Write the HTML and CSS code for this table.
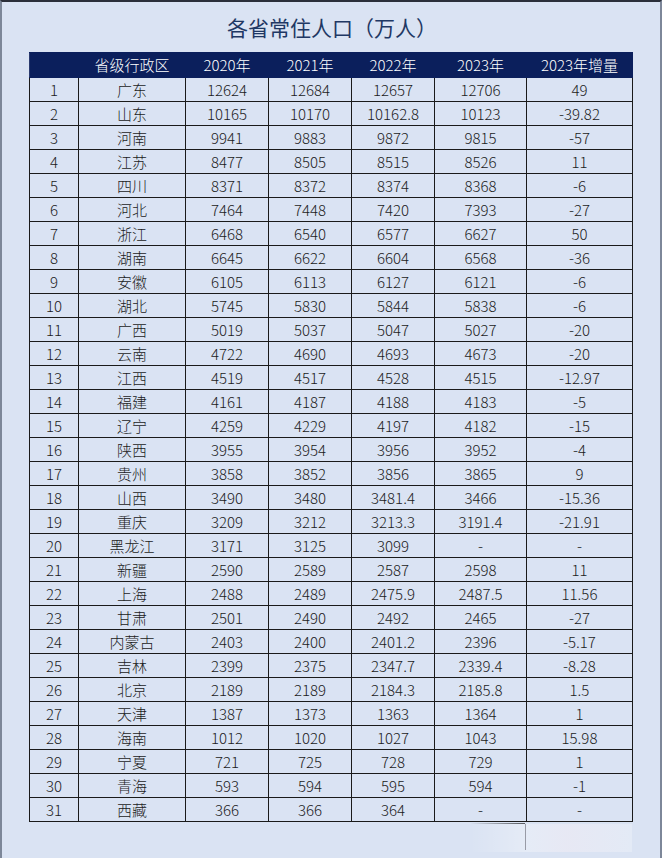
FILE: index.html
```html
<!DOCTYPE html>
<html lang="zh">
<head>
<meta charset="utf-8">
<title>各省常住人口（万人）</title>
<link rel="stylesheet" href="styles.css">
</head>
<body>
<div class="page">
  <h1 class="title">各省常住人口（万人）</h1>
  <table class="grid">
    <colgroup>
      <col class="c-no"><col class="c-prov"><col class="c-y"><col class="c-y"><col class="c-y"><col class="c-y23"><col class="c-inc">
    </colgroup>
    <thead>
      <tr><th></th><th>省级行政区</th><th>2020年</th><th>2021年</th><th>2022年</th><th>2023年</th><th>2023年增量</th></tr>
    </thead>
    <tbody>
      <tr><td>1</td><td>广东</td><td>12624</td><td>12684</td><td>12657</td><td>12706</td><td>49</td></tr>
      <tr><td>2</td><td>山东</td><td>10165</td><td>10170</td><td>10162.8</td><td>10123</td><td>-39.82</td></tr>
      <tr><td>3</td><td>河南</td><td>9941</td><td>9883</td><td>9872</td><td>9815</td><td>-57</td></tr>
      <tr><td>4</td><td>江苏</td><td>8477</td><td>8505</td><td>8515</td><td>8526</td><td>11</td></tr>
      <tr><td>5</td><td>四川</td><td>8371</td><td>8372</td><td>8374</td><td>8368</td><td>-6</td></tr>
      <tr><td>6</td><td>河北</td><td>7464</td><td>7448</td><td>7420</td><td>7393</td><td>-27</td></tr>
      <tr><td>7</td><td>浙江</td><td>6468</td><td>6540</td><td>6577</td><td>6627</td><td>50</td></tr>
      <tr><td>8</td><td>湖南</td><td>6645</td><td>6622</td><td>6604</td><td>6568</td><td>-36</td></tr>
      <tr><td>9</td><td>安徽</td><td>6105</td><td>6113</td><td>6127</td><td>6121</td><td>-6</td></tr>
      <tr><td>10</td><td>湖北</td><td>5745</td><td>5830</td><td>5844</td><td>5838</td><td>-6</td></tr>
      <tr><td>11</td><td>广西</td><td>5019</td><td>5037</td><td>5047</td><td>5027</td><td>-20</td></tr>
      <tr><td>12</td><td>云南</td><td>4722</td><td>4690</td><td>4693</td><td>4673</td><td>-20</td></tr>
      <tr><td>13</td><td>江西</td><td>4519</td><td>4517</td><td>4528</td><td>4515</td><td>-12.97</td></tr>
      <tr><td>14</td><td>福建</td><td>4161</td><td>4187</td><td>4188</td><td>4183</td><td>-5</td></tr>
      <tr><td>15</td><td>辽宁</td><td>4259</td><td>4229</td><td>4197</td><td>4182</td><td>-15</td></tr>
      <tr><td>16</td><td>陕西</td><td>3955</td><td>3954</td><td>3956</td><td>3952</td><td>-4</td></tr>
      <tr><td>17</td><td>贵州</td><td>3858</td><td>3852</td><td>3856</td><td>3865</td><td>9</td></tr>
      <tr><td>18</td><td>山西</td><td>3490</td><td>3480</td><td>3481.4</td><td>3466</td><td>-15.36</td></tr>
      <tr><td>19</td><td>重庆</td><td>3209</td><td>3212</td><td>3213.3</td><td>3191.4</td><td>-21.91</td></tr>
      <tr><td>20</td><td>黑龙江</td><td>3171</td><td>3125</td><td>3099</td><td>-</td><td>-</td></tr>
      <tr><td>21</td><td>新疆</td><td>2590</td><td>2589</td><td>2587</td><td>2598</td><td>11</td></tr>
      <tr><td>22</td><td>上海</td><td>2488</td><td>2489</td><td>2475.9</td><td>2487.5</td><td>11.56</td></tr>
      <tr><td>23</td><td>甘肃</td><td>2501</td><td>2490</td><td>2492</td><td>2465</td><td>-27</td></tr>
      <tr><td>24</td><td>内蒙古</td><td>2403</td><td>2400</td><td>2401.2</td><td>2396</td><td>-5.17</td></tr>
      <tr><td>25</td><td>吉林</td><td>2399</td><td>2375</td><td>2347.7</td><td>2339.4</td><td>-8.28</td></tr>
      <tr><td>26</td><td>北京</td><td>2189</td><td>2189</td><td>2184.3</td><td>2185.8</td><td>1.5</td></tr>
      <tr><td>27</td><td>天津</td><td>1387</td><td>1373</td><td>1363</td><td>1364</td><td>1</td></tr>
      <tr><td>28</td><td>海南</td><td>1012</td><td>1020</td><td>1027</td><td>1043</td><td>15.98</td></tr>
      <tr><td>29</td><td>宁夏</td><td>721</td><td>725</td><td>728</td><td>729</td><td>1</td></tr>
      <tr><td>30</td><td>青海</td><td>593</td><td>594</td><td>595</td><td>594</td><td>-1</td></tr>
      <tr><td>31</td><td>西藏</td><td>366</td><td>366</td><td>364</td><td>-</td><td>-</td></tr>
    </tbody>
  </table>
  <div class="smudge"></div>
</div>
</body>
</html>
```

FILE: styles.css
```css
html, body {
  margin: 0;
  padding: 0;
  background: #dae3f3;
}
.page {
  position: relative;
  box-sizing: border-box;
  width: 662px;
  height: 858px;
  background: #dae3f3;
  border-top: 2px solid #2b2f3a;
  border-left: 2px solid #7d8799;
  border-right: 2px solid #7d8799;
  font-family: "Noto Sans CJK SC", "Noto Sans", sans-serif;
  font-weight: 300;
  overflow: hidden;
}
.title {
  margin: 0;
  padding-top: 10px;
  height: 50px;
  box-sizing: border-box;
  text-align: center;
  font-size: 21px;
  line-height: 30px;
  font-weight: normal;
  color: #1f3864;
  padding-left: 2px;
}
.grid {
  margin-left: 27px;
  border-collapse: collapse;
  table-layout: fixed;
  width: 603px;
  font-size: 15px;
  color: #1b1b1b;
}
.c-no { width: 49px; }
.c-prov { width: 107px; }
.c-y { width: 83px; }
.c-y23 { width: 92px; }
.c-inc { width: 106px; }
.grid th {
  background: #0b1f5c;
  color: #ffffff;
  font-weight: 300;
  height: 24px;
  padding: 0;
  border: 1px solid #0b1f5c;
  border-left-color: #2a3a6e;
  line-height: 22px;
}
.grid td {
  height: 23px;
  padding: 0;
  text-align: center;
  border: 1px solid #1a1a1a;
  line-height: 22px;
}
.smudge {
  position: absolute;
  left: 468px;
  top: 822px;
  width: 162px;
  height: 28px;
  background: linear-gradient(90deg, rgba(255,255,255,0) 0%, rgba(255,255,255,0.3) 35%, rgba(250,240,245,0.4) 60%, rgba(255,255,255,0.25) 100%);
}
.smudge::before {
  content: "";
  position: absolute;
  left: 55px;
  top: 0;
  width: 1px;
  height: 26px;
  background: rgba(90,90,100,0.55);
}
.smudge::after {
  content: "";
  position: absolute;
  left: 0;
  top: -1px;
  width: 55px;
  height: 1px;
  background: linear-gradient(90deg, rgba(30,30,30,0), rgba(30,30,30,0.7));
}
```
